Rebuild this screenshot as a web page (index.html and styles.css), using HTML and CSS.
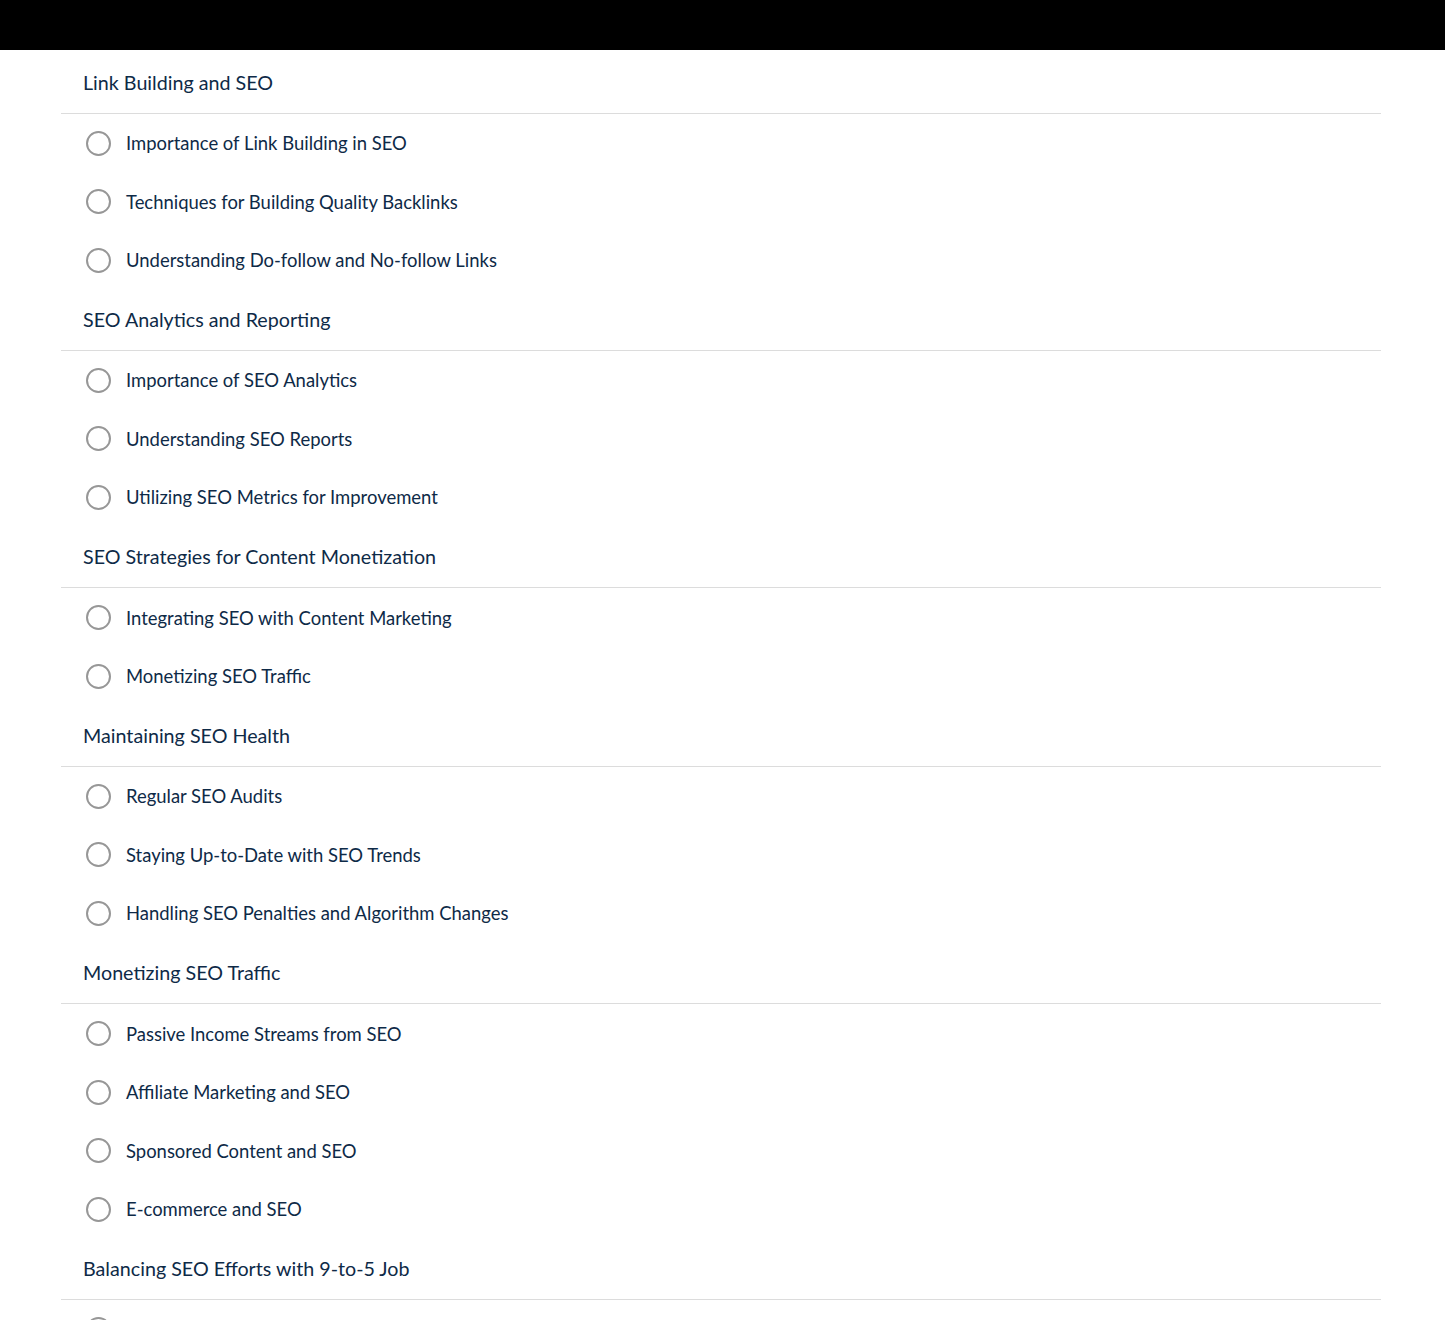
FILE: index.html
```html
<!DOCTYPE html>
<html lang="en">
<head>
    <meta charset="UTF-8">
    <meta name="viewport" content="width=device-width, initial-scale=1.0">
    <title>SEO Course Outline</title>
    <link rel="stylesheet" href="styles.css">
</head>
<body>
    <div class="topbar"></div>

    <div class="outline">
        <div class="section">
            <div class="section-title">Link Building and SEO</div>
            <label class="lesson"><span class="radio"></span>Importance of Link Building in SEO</label>
            <label class="lesson"><span class="radio"></span>Techniques for Building Quality Backlinks</label>
            <label class="lesson"><span class="radio"></span>Understanding Do-follow and No-follow Links</label>
        </div>

        <div class="section">
            <div class="section-title">SEO Analytics and Reporting</div>
            <label class="lesson"><span class="radio"></span>Importance of SEO Analytics</label>
            <label class="lesson"><span class="radio"></span>Understanding SEO Reports</label>
            <label class="lesson"><span class="radio"></span>Utilizing SEO Metrics for Improvement</label>
        </div>

        <div class="section">
            <div class="section-title">SEO Strategies for Content Monetization</div>
            <label class="lesson"><span class="radio"></span>Integrating SEO with Content Marketing</label>
            <label class="lesson"><span class="radio"></span>Monetizing SEO Traffic</label>
        </div>

        <div class="section">
            <div class="section-title">Maintaining SEO Health</div>
            <label class="lesson"><span class="radio"></span>Regular SEO Audits</label>
            <label class="lesson"><span class="radio"></span>Staying Up-to-Date with SEO Trends</label>
            <label class="lesson"><span class="radio"></span>Handling SEO Penalties and Algorithm Changes</label>
        </div>

        <div class="section">
            <div class="section-title">Monetizing SEO Traffic</div>
            <label class="lesson"><span class="radio"></span>Passive Income Streams from SEO</label>
            <label class="lesson"><span class="radio"></span>Affiliate Marketing and SEO</label>
            <label class="lesson"><span class="radio"></span>Sponsored Content and SEO</label>
            <label class="lesson"><span class="radio"></span>E-commerce and SEO</label>
        </div>

        <div class="section">
            <div class="section-title">Balancing SEO Efforts with 9-to-5 Job</div>
            <label class="lesson"><span class="radio"></span></label>
        </div>
    </div>
</body>
</html>
```

FILE: styles.css
```css
body {
    margin: 0;
    font-family: Lato, "Open Sans", sans-serif;
    color: #0e2a47;
    background: #fff;
}
.topbar { height: 50px; background: #000; }
.outline { width: 1320px; margin: 0 0 0 61px; padding-top: 2px; }
.section-title {
    height: 60.75px;
    display: flex;
    align-items: center;
    padding-left: 22px;
    font-size: 19.7px;
    border-bottom: 1px solid #dcdcdc;
}
.lesson {
    height: 58.5px;
    display: flex;
    align-items: center;
    padding-left: 25px;
    font-size: 18.45px;
    cursor: pointer;
}
.radio {
    width: 21px;
    height: 21px;
    border: 2.5px solid #979797;
    border-radius: 50%;
    margin-right: 15px;
    flex-shrink: 0;
}
```
